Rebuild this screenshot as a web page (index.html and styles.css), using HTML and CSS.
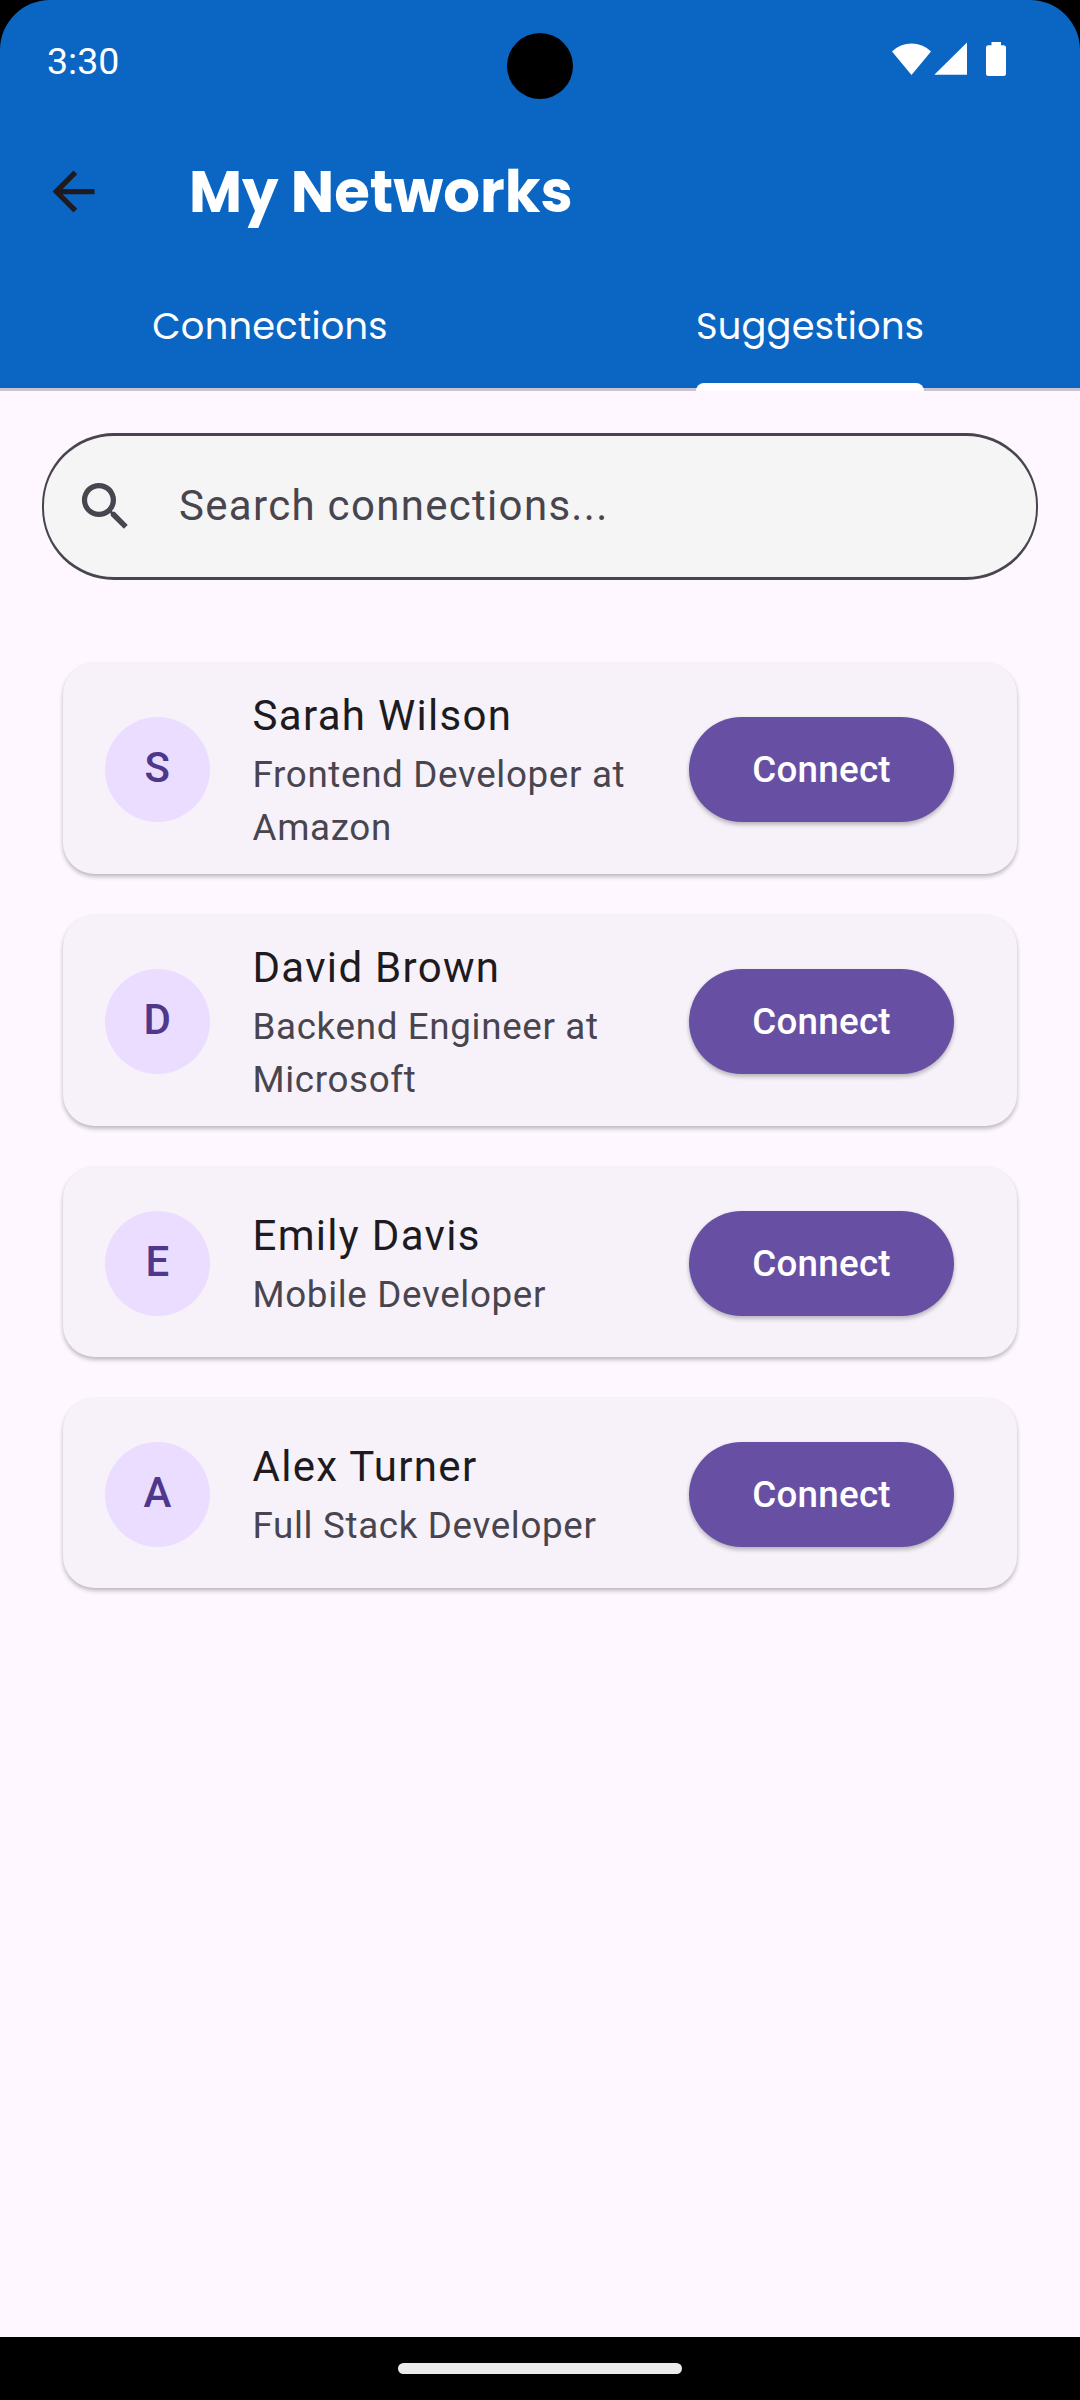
FILE: index.html
```html
<!DOCTYPE html>
<html lang="en">
<head>
<meta charset="utf-8">
<title>My Networks</title>
<link rel="stylesheet" href="styles.css">
</head>
<body>
<div class="screen">
  <header class="header">
    <div class="status">
      <span class="clock">3:30</span>
      <svg class="status-icons" width="116" height="36" viewBox="0 0 116 36" fill="#fff">
        <path d="M0 9.6C10.500 -1.300 28.500 -1.300 39 9.600L19.500 33z"/>
        <path d="M75 0.500V32.800H42.300z"/>
        <path d="M99.500 0H109V3.300H111.500Q114 3.300 114 5.800V31.500Q114 34 111.500 34H96.500Q94 34 94 31.500V5.800Q94 3.300 96.500 3.300H99.500z"/>
      </svg>
    </div>
    <div class="camera"></div>
    <div class="appbar">
      <svg class="icon" viewBox="0 0 24 24" fill="#1d1b20"><path d="M20 11H7.830l5.590-5.590L12 4l-8 8 8 8 1.410-1.410L7.830 13H20v-2z"/></svg>
      <h1 class="title">My Networks</h1>
    </div>
    <nav class="tabs">
      <div class="tab"><span class="tab-label">Connections</span></div>
      <div class="tab"><span class="tab-label tab-active">Suggestions</span></div>
    </nav>
  </header>
  <main class="content">
    <div class="search">
      <svg class="icon" viewBox="0 0 24 24" fill="#49454f"><path d="M15.500 14h-.79l-.28-.27A6.471 6.471 0 0 0 16 9.500 6.500 6.500 0 1 0 9.500 16c1.610 0 3.090-.59 4.230-1.570l.27.28v.79l5 4.990L20.490 19l-4.990-5zm-6 0C7.010 14 5 11.990 5 9.500S7.010 5 9.500 5 14 7.010 14 9.500 11.990 14 9.500 14z"/></svg>
      <span class="placeholder">Search connections...</span>
    </div>
    <div class="list">
      <div class="card">
        <div class="avatar">S</div>
        <div class="info"><div class="name">Sarah Wilson</div><div class="role">Frontend Developer at Amazon</div></div>
        <button class="connect">Connect</button>
      </div>
      <div class="card">
        <div class="avatar">D</div>
        <div class="info"><div class="name">David Brown</div><div class="role">Backend Engineer at Microsoft</div></div>
        <button class="connect">Connect</button>
      </div>
      <div class="card">
        <div class="avatar">E</div>
        <div class="info"><div class="name">Emily Davis</div><div class="role">Mobile Developer</div></div>
        <button class="connect">Connect</button>
      </div>
      <div class="card">
        <div class="avatar">A</div>
        <div class="info"><div class="name">Alex Turner</div><div class="role">Full Stack Developer</div></div>
        <button class="connect">Connect</button>
      </div>
    </div>
  </main>
  <footer class="navbar"><div class="handle"></div></footer>
</div>
</body>
</html>
```
FILE: styles.css
```css
* { box-sizing: border-box; }
body { margin: 0; background: #000; font-family: Roboto, sans-serif; }
.screen {
  width: 1080px;
  height: 2400px;
  display: flex;
  flex-direction: column;
  overflow: hidden;
  background: #000;
}
.header {
  position: relative;
  height: 391px;
  background: #0a66c2;
  border-bottom: 3px solid #cac4d0;
  border-radius: 50px 50px 0 0;
}
.status {
  height: 118px;
  padding: 42px 72px 0 47px;
  display: flex;
  justify-content: space-between;
  align-items: flex-start;
}
.clock { color: #fff; font-size: 37.500px; line-height: 38px; }
.camera {
  position: absolute;
  left: 507px;
  top: 33px;
  width: 66px;
  height: 66px;
  border-radius: 50%;
  background: #000;
}
.appbar {
  height: 147px;
  padding-left: 42px;
  display: flex;
  align-items: center;
}
.icon { width: 63px; height: 63px; flex: none; display: block; }
.title {
  margin: 0 0 0 84px;
  color: #fff;
  font: 700 57.750px/80px Poppins, Inter, sans-serif;
}
.tabs { display: flex; height: 126px; }
.tab { flex: 1; display: flex; justify-content: center; }
.tab-label {
  position: relative;
  padding-top: 34px;
  color: #fff;
  font: 400 36.750px/54px Poppins, Inter, sans-serif;
  letter-spacing: .260px;
}
.tab-active::after {
  content: "";
  position: absolute;
  left: 0;
  right: 0;
  bottom: 0;
  height: 8px;
  border-radius: 8px 8px 0 0;
  background: #fff;
}
.content { height: 1946px; padding: 42px 42px 0; background: #fef7ff; }
.search {
  height: 147px;
  padding: 0 0 1px 30px;
  display: flex;
  align-items: center;
  border: solid #49454f;
  border-width: 3px 2px;
  border-radius: 72px;
  background: #f5f5f5;
}
.placeholder { margin: -1px 0 0 42px; color: #49454f; font-size: 42px; line-height: 63px; letter-spacing: 1.310px; }
.list { padding: 83px 21px 0; display: flex; flex-direction: column; gap: 41px; }
.card {
  min-height: 190px;
  padding: 22px 63px 20px 42px;
  display: flex;
  align-items: center;
  border-radius: 31.500px;
  background: #f7f2fa;
  box-shadow: 0 3px 4px rgba(0, 0, 0, .22), 0 1px 4px rgba(0, 0, 0, .06);
}
.avatar {
  flex: none;
  width: 105px;
  height: 105px;
  border-radius: 50%;
  background: #eaddff;
  color: #4f378b;
  font-size: 42px;
  font-weight: 500;
  line-height: 102px;
  letter-spacing: .4px;
  text-align: center;
}
.info { flex: 1; margin: 0 41.500px 0 42.500px; }
.name { color: #1d1b20; font-size: 42px; line-height: 62px; letter-spacing: 1.310px; }
.role { margin-top: 2px; color: #49454f; font-size: 36.750px; line-height: 52.500px; letter-spacing: .660px; }
.connect {
  flex: none;
  width: 265px;
  height: 105px;
  padding: 1px 0 0;
  border: 0;
  border-radius: 53px;
  background: #6750a4;
  color: #fff;
  font: 500 36.750px/52px Roboto, sans-serif;
  letter-spacing: .260px;
  box-shadow: 0 3px 4px rgba(0, 0, 0, .22), 0 1px 4px rgba(0, 0, 0, .06);
}
.navbar { height: 63px; padding-top: 26px; display: flex; justify-content: center; }
.handle { width: 284px; height: 11px; border-radius: 6px; background: #ebebeb; }
```
